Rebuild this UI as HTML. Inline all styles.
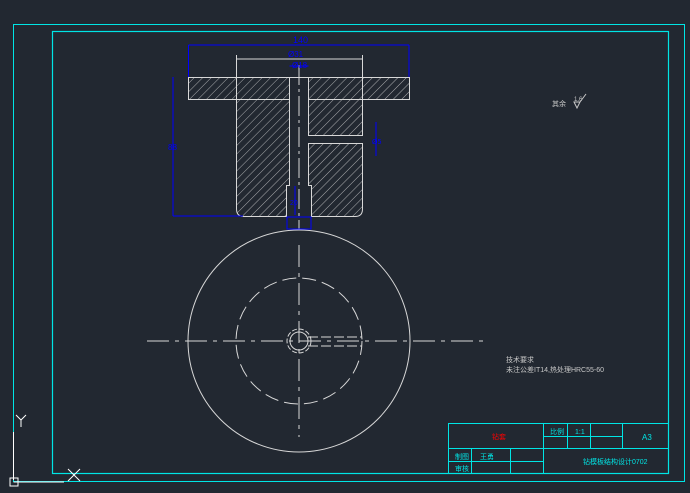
<!DOCTYPE html>
<html><head><meta charset="utf-8"><style>
html,body{margin:0;padding:0;background:#222831;}
svg{display:block;font-family:"Liberation Sans","Noto Sans CJK SC",sans-serif;}
</style></head><body>
<svg width="690" height="493" viewBox="0 0 690 493" xmlns="http://www.w3.org/2000/svg">
<defs>
<pattern id="h" width="6" height="6" patternUnits="userSpaceOnUse" patternTransform="rotate(45)">
<line x1="0" y1="0" x2="0" y2="6" stroke="#d0d0d0" stroke-width="0.8"/>
</pattern>
</defs>
<rect width="690" height="493" fill="#222831"/>
<rect x="13.5" y="24.5" width="671" height="457" fill="none" stroke="#00e5e5" stroke-width="1"/>
<rect x="52.5" y="31.5" width="616" height="442" fill="none" stroke="#00e5e5" stroke-width="1.2"/>
<line x1="13.5" y1="432" x2="13.5" y2="480" stroke="#fff"/>
<line x1="13.5" y1="482" x2="64" y2="482" stroke="#fff"/>
<rect x="10" y="478" width="8" height="8" fill="none" stroke="#fff"/>
<path d="M16 415 L21 420 L26 415 M21 420 V427" stroke="#fff" fill="none"/>
<path d="M68 469 L80 481 M80 469 L68 481" stroke="#fff"/>
<g stroke="#d8d8d8" stroke-width="1" fill="url(#h)">
<rect x="188.5" y="77.5" width="101" height="22"/>
<rect x="308.5" y="77.5" width="101" height="22"/>
<path d="M236.5 99.5 H289.5 V185.5 H286.5 V216.5 H244 Q236.5 216.5 236.5 209 Z"/>
<path d="M308.5 99.5 H362.5 V135.5 H308.5 Z"/>
<path d="M308.5 143.5 H362.5 V209 Q362.5 216.5 355 216.5 H311.5 V185.5 H308.5 Z"/>
</g>
<g stroke="#d8d8d8" fill="none">
<line x1="236.5" y1="77.5" x2="236.5" y2="99.5"/>
<line x1="362.5" y1="77.5" x2="362.5" y2="99.5"/>
<line x1="289.5" y1="77.5" x2="308.5" y2="77.5"/>
<line x1="299" y1="65" x2="299" y2="230" stroke-dasharray="20,4,3,4"/>
<line x1="236.5" y1="55" x2="236.5" y2="77"/>
<line x1="362.5" y1="55" x2="362.5" y2="77"/>
<line x1="236.5" y1="59" x2="362.5" y2="59"/>
</g>
<g stroke="#0000ff" fill="#0000ff" stroke-width="1">
<line x1="188.5" y1="45" x2="409" y2="45"/>
<line x1="188.5" y1="45" x2="188.5" y2="77"/>
<line x1="409" y1="45" x2="409" y2="77"/>
<line x1="173" y1="77" x2="173" y2="216"/>
<line x1="173" y1="216" x2="243" y2="216"/>
<line x1="289.5" y1="66" x2="308.5" y2="66"/>
<line x1="376" y1="122" x2="376" y2="156"/>
<line x1="295" y1="186" x2="295" y2="215"/>
<rect x="287" y="217" width="24" height="12" fill="none"/>
</g>
<g fill="#0000ff" font-size="9">
<text x="293" y="43">140</text>
<text x="288" y="57" font-size="8">Ø31</text>
<text x="292" y="68" font-size="8">Ø18</text>
<text x="168" y="150" font-size="8">88</text>
<text x="290" y="205" font-size="7">20</text>
<text x="372" y="144" font-size="7">Ø5</text>
</g>
<g stroke="#d8d8d8" fill="none">
<circle cx="299" cy="341" r="111"/>
<circle cx="299" cy="341" r="63" stroke-dasharray="14,6"/>
<circle cx="299" cy="341" r="9"/>
<circle cx="299" cy="341" r="12" stroke-dasharray="5,2"/>
<line x1="147" y1="341" x2="483" y2="341" stroke-dasharray="22,6,4,6"/>
<line x1="299" y1="245" x2="299" y2="437" stroke-dasharray="22,6,4,6"/>
<line x1="308" y1="337" x2="362" y2="337" stroke-dasharray="10,3"/>
<line x1="308" y1="346" x2="362" y2="346" stroke-dasharray="10,3"/>
</g>
<g fill="#c8c8c8" font-size="7">
<text x="552" y="106">其余</text>
<text x="574" y="101" font-size="6">1.6</text>
<path d="M574 102 L577 108 L580 102 Z M580 102 L586 94" stroke="#c8c8c8" fill="none"/>
<text x="506" y="362">技术要求</text>
<text x="506" y="372">未注公差IT14,热处理HRC55-60</text>
</g>
<g stroke="#00e5e5" fill="none" stroke-width="1">
<rect x="448.5" y="423.5" width="220" height="50"/>
<line x1="448.5" y1="448.5" x2="668.5" y2="448.5"/>
<line x1="543.5" y1="423.5" x2="543.5" y2="473.5"/>
<line x1="567.5" y1="423.5" x2="567.5" y2="448.5"/>
<line x1="590.5" y1="423.5" x2="590.5" y2="448.5"/>
<line x1="622.5" y1="423.5" x2="622.5" y2="448.5"/>
<line x1="543.5" y1="436.5" x2="622.5" y2="436.5"/>
<line x1="471.5" y1="448.5" x2="471.5" y2="473.5"/>
<line x1="510.5" y1="448.5" x2="510.5" y2="473.5"/>
<line x1="448.5" y1="461.5" x2="543.5" y2="461.5"/>
</g>
<g fill="#00e5e5" font-size="7">
<text x="550" y="434">比例</text>
<text x="575" y="434">1:1</text>
<text x="642" y="440" font-size="8">A3</text>
<text x="455" y="459">制图</text>
<text x="480" y="459">王勇</text>
<text x="455" y="471">审核</text>
<text x="583" y="464">钻模板结构设计0702</text>
</g>
<text x="492" y="439" fill="#ff0000" font-size="7">钻套</text>
</svg>
</body></html>
